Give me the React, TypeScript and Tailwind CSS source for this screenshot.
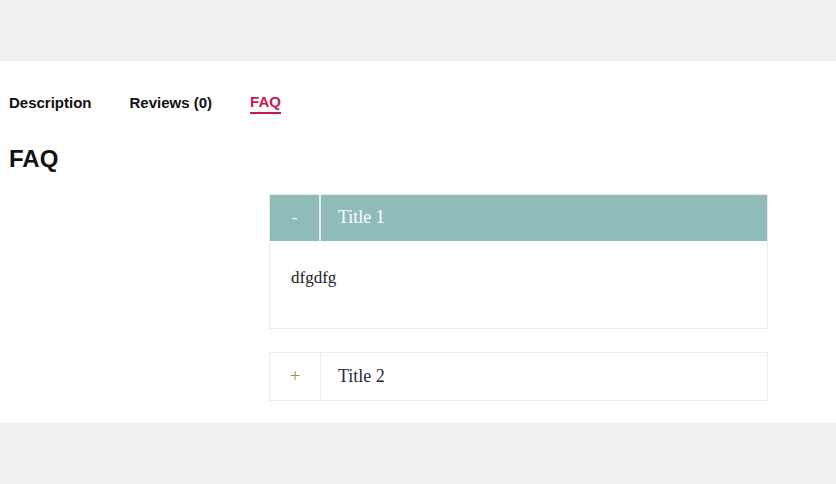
import React, { useState } from 'react';

const faqs = [
    { title: 'Title 1', body: 'dfgdfg' },
    { title: 'Title 2', body: '' },
];

const App = () => {
    const [open, setOpen] = useState<number>(0);
    return (
        <div className="min-h-[484px] bg-[#f0f0f0] pt-[61px] pb-[62px]">
            <section className="bg-white pb-[22px] font-['Liberation_Sans',Arial,sans-serif]">
                <div className="flex items-start gap-[38px] px-[9px] pt-[31px] text-[15px] font-bold text-[#111]">
                    <span className="pb-[2px]">Description</span>
                    <span className="pb-[2px]">Reviews (0)</span>
                    <span className="border-b-2 border-[#c8174a] leading-[20px] text-[#c8174a]">FAQ</span>
                </div>
                <h2 className="px-[9px] pt-[28px] text-[24px] font-bold leading-[28px] text-[#111]">FAQ</h2>
                <div className="ml-[269px] mr-[68px] mt-[21px] flex flex-col gap-[23px] font-['Liberation_Serif','Times_New_Roman',serif]">
                    {faqs.map((item, id) => {
                        const active = open === id;
                        return (
                            <div key={id.toString()} className="border border-[#ececec]">
                                <button
                                    onClick={() => setOpen(active ? -1 : id)}
                                    className={
                                        active
                                            ? 'flex h-[46px] w-full items-stretch bg-[#8fbbb9] text-left text-white'
                                            : 'flex h-[47px] w-full items-stretch bg-white text-left text-[#1f2a3a]'
                                    }
                                >
                                    <span
                                        className={
                                            active
                                                ? 'flex w-[51px] shrink-0 items-center justify-center border-r-2 border-[#e6f0ef] text-[17px]'
                                                : 'flex w-[51px] shrink-0 items-center justify-center border-r border-[#ececec] text-[18px] text-[#a88552]'
                                        }
                                    >
                                        {active ? '-' : '+'}
                                    </span>
                                    <span className="flex items-center pl-[17px] text-[18px]">{item.title}</span>
                                </button>
                                {active && (
                                    <div className="h-[87px] px-[21px] pt-[24px] text-[17px] text-[#222]">{item.body}</div>
                                )}
                            </div>
                        );
                    })}
                </div>
            </section>
        </div>
    );
};

export default App;
